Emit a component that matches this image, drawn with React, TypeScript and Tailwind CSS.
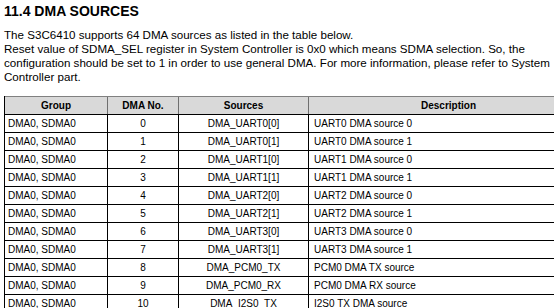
const rows = [
  ["DMA0, SDMA0", "0", "DMA_UART0[0]", "UART0 DMA source 0"],
  ["DMA0, SDMA0", "1", "DMA_UART0[1]", "UART0 DMA source 1"],
  ["DMA0, SDMA0", "2", "DMA_UART1[0]", "UART1 DMA source 0"],
  ["DMA0, SDMA0", "3", "DMA_UART1[1]", "UART1 DMA source 1"],
  ["DMA0, SDMA0", "4", "DMA_UART2[0]", "UART2 DMA source 0"],
  ["DMA0, SDMA0", "5", "DMA_UART2[1]", "UART2 DMA source 1"],
  ["DMA0, SDMA0", "6", "DMA_UART3[0]", "UART3 DMA source 0"],
  ["DMA0, SDMA0", "7", "DMA_UART3[1]", "UART3 DMA source 1"],
  ["DMA0, SDMA0", "8", "DMA_PCM0_TX", "PCM0 DMA TX source"],
  ["DMA0, SDMA0", "9", "DMA_PCM0_RX", "PCM0 DMA RX source"],
  ["DMA0, SDMA0", "10", "DMA_I2S0_TX", "I2S0 TX DMA source"],
  ["DMA0, SDMA0", "11", "DMA_I2S0_RX", "I2S0 RX DMA source"],
];

const grid = "grid grid-cols-[103px_71px_130px_279px]";

export default function App() {
  return (
    <div className="w-[554px] h-[308px] overflow-hidden bg-white text-black font-['Liberation_Sans',Arial,sans-serif]">
      <h1 className="pl-[4px] pt-[3px] text-[14px] leading-[16px] font-bold">11.4 DMA SOURCES</h1>

      <p className="pl-[4px] mt-[9px] text-[11.6px] leading-[14px] whitespace-nowrap">
        The S3C6410 supports 64 DMA sources as listed in the table below.
        <br />
        Reset value of SDMA_SEL register in System Controller is 0x0 which means SDMA selection. So, the
        <br />
        configuration should be set to 1 in order to use general DMA. For more information, please refer to System
        <br />
        Controller part.
      </p>

      {/* table */}
      <div className="pl-[4px] mt-[12px]">
        <div className="w-[584px] border-l border-black text-[10px]">
          <div className={`${grid} h-[19px] bg-[#d9d9d9] border-t border-t-[#808080] border-b border-b-black font-bold`}>
            <div className="flex items-center justify-center border-r border-[#6f6f6f]">Group</div>
            <div className="flex items-center justify-center border-r border-[#6f6f6f]">DMA No.</div>
            <div className="flex items-center justify-center border-r border-[#6f6f6f]">Sources</div>
            <div className="flex items-center justify-center">Description</div>
          </div>
          {rows.map((r, i) => (
            <div key={i} className={`${grid} h-[18px] border-b border-black`}>
              <div className="flex items-center pl-[3px] border-r border-black">{r[0]}</div>
              <div className="flex items-center justify-center border-r border-black">{r[1]}</div>
              <div className="flex items-center justify-center border-r border-black">{r[2]}</div>
              <div className="flex items-center pl-[5px]">{r[3]}</div>
            </div>
          ))}
        </div>
      </div>
    </div>
  );
}
